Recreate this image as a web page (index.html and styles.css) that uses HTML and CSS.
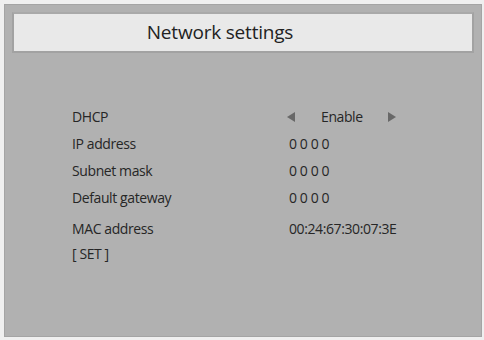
FILE: index.html
```html
<!DOCTYPE html>
<html>
<head>
<meta charset="utf-8">
<link rel="stylesheet" href="styles.css">
</head>
<body>
<div class="panel">
  <div class="title">Network settings</div>
  <div class="settings">
    <div class="label">DHCP</div>
    <div class="value select">
      <svg class="arrow" width="8" height="10" viewBox="0 0 8 10"><polygon points="8,0 8,10 0,5" fill="#686868"/></svg>
      <span class="opt">Enable</span>
      <svg class="arrow" width="8" height="10" viewBox="0 0 8 10"><polygon points="0,0 0,10 8,5" fill="#686868"/></svg>
    </div>
    <div class="label">IP address</div>
    <div class="value">0 0 0 0</div>
    <div class="label">Subnet mask</div>
    <div class="value">0 0 0 0</div>
    <div class="label">Default gateway</div>
    <div class="value">0 0 0 0</div>
    <div class="label spaced">MAC address</div>
    <div class="value spaced">00:24:67:30:07:3E</div>
    <div class="label set">[ SET ]</div>
    <div class="value set"></div>
  </div>
</div>
</body>
</html>
```
FILE: styles.css
```css
* { box-sizing: border-box; }
html, body { margin: 0; padding: 0; }
body {
  width: 484px;
  height: 340px;
  background: #efefef;
  font-family: "Open Sans", "Noto Sans", sans-serif;
  color: #262626;
  padding: 4px 2px 3px 4px;
}
.panel {
  width: 478px;
  height: 333px;
  background: #b1b1b1;
  border: 1px solid #a4a4a4;
  padding: 7px;
}
.title {
  width: 462px;
  height: 41px;
  background: #e9e9e9;
  border: 2px solid #a2a2a2;
  border-top-color: #a9a9a9;
  font-size: 19px;
  line-height: 37px;
  text-align: center;
  padding-right: 46px;
  letter-spacing: -0.2px;
  color: #222;
}
.settings {
  display: grid;
  grid-template-columns: 217px auto;
  margin-top: 50px;
  padding-left: 60px;
  font-size: 14px;
  letter-spacing: -0.4px;
  line-height: 27px;
}
.label, .value { height: 27px; }
.spaced { margin-top: 4px; }
.set { height: 23px; line-height: 23px; }
.select {
  display: flex;
  align-items: center;
  margin-left: -2px;
}
.opt { margin: 0 25px 0 26px; }
.arrow { display: block; }
```
